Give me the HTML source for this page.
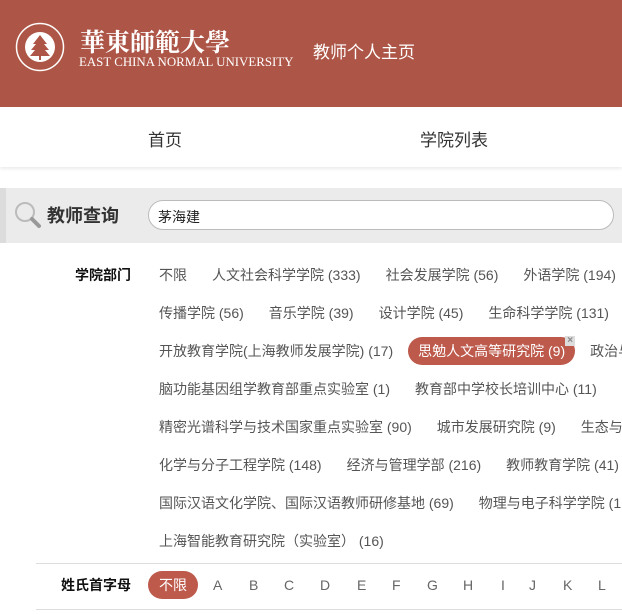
<!DOCTYPE html>
<html><head><meta charset="utf-8"><style>
*{margin:0;padding:0;box-sizing:border-box}
html{width:622px;height:615px;overflow:hidden}
body{width:622px;height:615px;overflow:hidden;background:#fff;font-family:"Liberation Sans","Noto Sans CJK SC",sans-serif;position:relative}
.hd{position:absolute;left:0;top:0;width:622px;height:107px;background:#ad5647;color:#fff}
.nav{position:absolute;top:107px;left:0;width:622px;height:60px;box-shadow:0 2px 3px rgba(0,0,0,.08)}
.nav span{position:absolute;top:19px;font-size:17px;color:#333}
.sb{position:absolute;top:188px;left:0;width:622px;height:55px;background:#ebebeb;border-left:6px solid #dcdcdc}
.row{position:absolute;left:159px;white-space:nowrap;font-size:14px;color:#555;height:20px;line-height:20px}
.row span{margin-right:25px}
.lbl{position:absolute;font-size:14px;font-weight:bold;color:#111;line-height:20px}
.hr{position:absolute;left:36px;width:586px;height:1px;background:#ddd}
</style></head><body>
<div class="hd">
<svg style="position:absolute;left:15px;top:22px" width="50" height="50" viewBox="0 0 50 50"><circle cx="25" cy="25" r="23.5" fill="none" stroke="#fff" stroke-width="1.5"/><circle cx="25" cy="25" r="15" fill="#fff"/><path d="M25 13 L18 22 H21 L16 28 H20 L15 34 H35 L30 28 H34 L29 22 H32 Z" fill="#ad5647"/><rect x="24" y="34" width="2" height="4" fill="#ad5647"/></svg>
<div style="position:absolute;left:80px;top:27px;font-family:'Noto Serif CJK SC',serif;font-size:25px;font-weight:bold;line-height:28px">華東師範大學</div>
<div style="position:absolute;left:79px;top:55px;font-family:'Liberation Serif',serif;font-size:12.9px;line-height:14px;white-space:nowrap">EAST CHINA NORMAL UNIVERSITY</div>
<div style="position:absolute;left:313px;top:42px;font-size:17px;line-height:22px">教师个人主页</div>
</div>
<div class="nav"><span style="left:148px">首页</span><span style="left:420px">学院列表</span></div>
<div class="sb">
<svg style="position:absolute;left:8px;top:13px" width="28" height="28" viewBox="0 0 28 28"><circle cx="11" cy="11" r="9" fill="none" stroke="#bbb" stroke-width="2"/><path d="M18 18 L25 25" stroke="#999" stroke-width="4" stroke-linecap="round"/></svg>
<div style="position:absolute;left:41px;top:14px;font-size:18px;font-weight:bold;color:#333">教师查询</div>
<div style="position:absolute;left:142px;top:12px;width:466px;height:30px;border:1px solid #bbb;border-radius:15px;background:#fff;font-size:14px;color:#222;padding:6px 0 0 9px">茅海建</div>
</div>
<div class="lbl" style="left:75px;top:265px">学院部门</div>
<div class="row" style="top:265px"><span>不限</span><span>人文社会科学学院 (333)</span><span>社会发展学院 (56)</span><span>外语学院 (194)</span></div>
<div class="row" style="top:303px"><span>传播学院 (56)</span><span>音乐学院 (39)</span><span>设计学院 (45)</span><span>生命科学学院 (131)</span></div>
<div class="row" style="top:341px"><span style="margin-right:15px">开放教育学院(上海教师发展学院) (17)</span><span style="display:inline-block;background:#bd5a4c;color:#fff;border-radius:14px;padding:0 10px;height:28px;line-height:28px;margin-top:-4px;vertical-align:top;position:relative;margin-right:15px">思勉人文高等研究院 (9)<b style="position:absolute;right:0;top:-1px;width:10px;height:10px;background:#ddd;color:#888;font-size:10px;line-height:10px;text-align:center">×</b></span><span>政治与国际关系学院</span></div>
<div class="row" style="top:379px"><span>脑功能基因组学教育部重点实验室 (1)</span><span>教育部中学校长培训中心 (11)</span></div>
<div class="row" style="top:417px"><span>精密光谱科学与技术国家重点实验室 (90)</span><span>城市发展研究院 (9)</span><span>生态与环境科学学院</span></div>
<div class="row" style="top:455px"><span>化学与分子工程学院 (148)</span><span>经济与管理学部 (216)</span><span>教师教育学院 (41)</span></div>
<div class="row" style="top:493px"><span>国际汉语文化学院、国际汉语教师研修基地 (69)</span><span>物理与电子科学学院 (1</span></div>
<div class="row" style="top:531px"><span>上海智能教育研究院（实验室） (16)</span></div>
<div class="hr" style="top:563px"></div>
<div class="lbl" style="left:61px;top:575px">姓氏首字母</div>
<div style="position:absolute;left:148px;top:571px;width:50px;height:28px;border-radius:14px;background:#bd5a4c;color:#fff;font-size:14px;line-height:28px;text-align:center">不限</div>
<div class="row" style="left:213px;top:575px;color:#666"><span style="position:absolute;left:0">A</span><span style="position:absolute;left:36px">B</span><span style="position:absolute;left:71px">C</span><span style="position:absolute;left:107px">D</span><span style="position:absolute;left:144px">E</span><span style="position:absolute;left:179px">F</span><span style="position:absolute;left:214px">G</span><span style="position:absolute;left:250px">H</span><span style="position:absolute;left:288px">I</span><span style="position:absolute;left:316px">J</span><span style="position:absolute;left:350px">K</span><span style="position:absolute;left:385px">L</span></div>
<div class="hr" style="top:609px"></div>
</body></html>
